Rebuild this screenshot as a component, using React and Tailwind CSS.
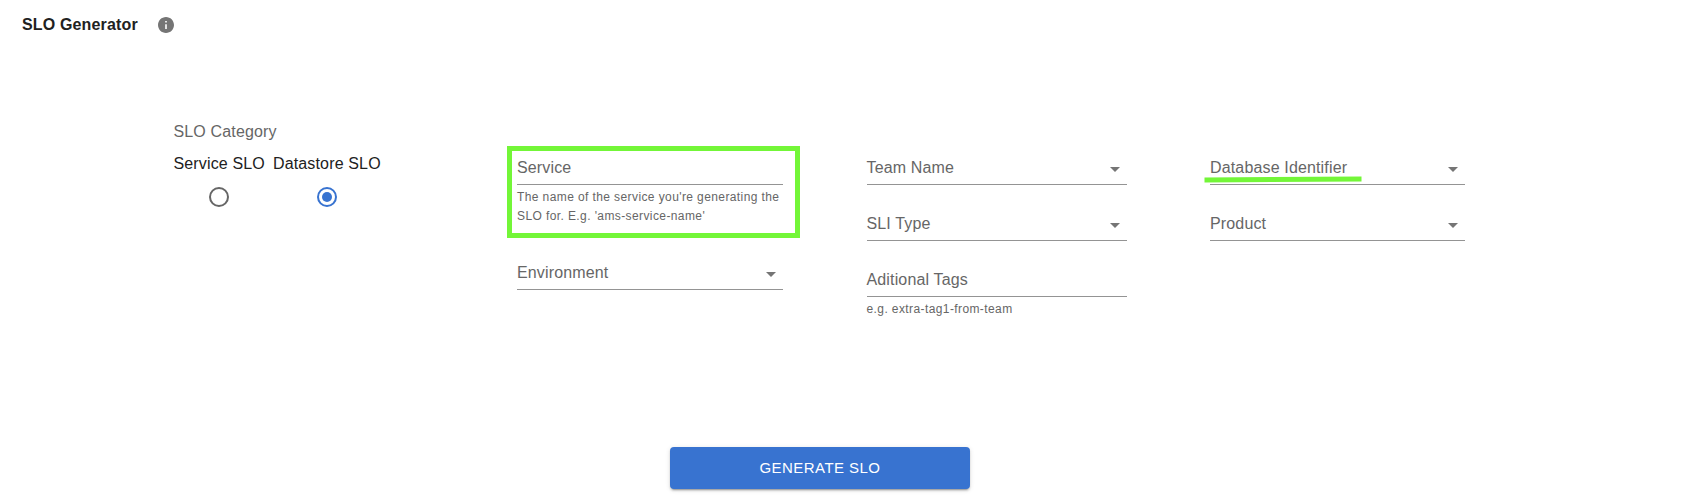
function Caret() {
  return (
    <svg viewBox="0 0 24 24" className="mt-1 size-6 shrink-0 fill-[#757575]" aria-hidden="true">
      <path d="M7 10l5 5 5-5z" />
    </svg>
  );
}

function Field({ label, helper, select, children }) {
  return (
    <div>
      <div className="relative flex h-8 justify-between border-b border-[#949494] text-[#666666]">
        <span className="pt-[3px] leading-6 whitespace-nowrap tracking-[0.15px]">{label}</span>
        {select && <Caret />}
        {children}
      </div>
      {helper && (
        <p className="mt-[3px] text-[12px] leading-[19px] tracking-[0.4px] text-[#666666]">{helper}</p>
      )}
    </div>
  );
}

function RadioOption({ label, checked }) {
  return (
    <div className="flex flex-col items-center">
      <span className="leading-6 whitespace-nowrap">{label}</span>
      <svg viewBox="0 0 24 24" className={checked ? "mt-[9px] size-6 text-[#3873d0]" : "mt-[9px] size-6 text-[#666666]"}>
        <circle cx="12" cy="12" r="9" fill="none" stroke="currentColor" strokeWidth="2" />
        {checked && <circle cx="12" cy="12" r="5" fill="currentColor" />}
      </svg>
    </div>
  );
}

export default function App() {
  return (
    <main className="h-[503px] w-[1682px] overflow-hidden bg-white font-['Liberation_Sans',Arial,sans-serif] text-[16px] text-[#212121]">
      <header className="flex h-[49px] items-center gap-5 pl-[22px]">
        <h1 className="text-[16px] font-bold leading-6 tracking-[0.15px]">SLO Generator</h1>
        <svg viewBox="2 2 20 20" className="mt-px size-4 fill-[#757575]">
          <path d="M12 2C6.48 2 2 6.48 2 12s4.48 10 10 10 10-4.48 10-10S17.52 2 12 2zm1 15h-2v-6h2v6zm0-8h-2V7h2v2z" />
        </svg>
      </header>

      <section className="flex h-[398px] pl-[173.5px]">
        <div className="w-[343.5px] pt-[71px]">
          <h2 className="leading-6 tracking-[0.15px] text-[#666666]">SLO Category</h2>
          <div className="mt-2 flex gap-2 tracking-[0.15px]">
            <RadioOption label="Service SLO" />
            <RadioOption label="Datastore SLO" checked />
          </div>
        </div>

        <div className="mr-[83.5px] w-[266px] pt-[104px]">
          <div className="relative h-[81px]">
            <div className="absolute -top-[7px] -left-[10px] h-[92px] w-[293px] border-5 border-[#73f638]" />
            <Field label="Service" helper="The name of the service you're generating the SLO for. E.g. 'ams-service-name'" />
          </div>
          <div className="mt-6">
            <Field label="Environment" select />
          </div>
        </div>

        <div className="mr-[83.5px] flex w-[260px] flex-col gap-6 pt-[104px]">
          <Field label="Team Name" select />
          <Field label="SLI Type" select />
          <Field label="Aditional Tags" helper="e.g. extra-tag1-from-team" />
        </div>

        <div className="flex w-[255px] flex-col gap-6 pt-[104px]">
          <Field label="Database Identifier" select>
            <svg viewBox="0 0 158 8" className="absolute top-[22px] -left-[6px] h-2 w-[158px]">
              <path d="M0.5 5L157.5 4" stroke="#73f638" strokeWidth="5" />
            </svg>
          </Field>
          <Field label="Product" select />
        </div>
      </section>

      <button className="ml-[670px] flex h-[42px] w-[300px] items-center justify-center rounded bg-[#3873d0] text-[15px] tracking-[0.45px] text-white shadow-[0_3px_1px_-2px_rgba(0,0,0,0.2),0_2px_2px_0_rgba(0,0,0,0.14),0_1px_5px_0_rgba(0,0,0,0.12)]">
        GENERATE SLO
      </button>
    </main>
  );
}
